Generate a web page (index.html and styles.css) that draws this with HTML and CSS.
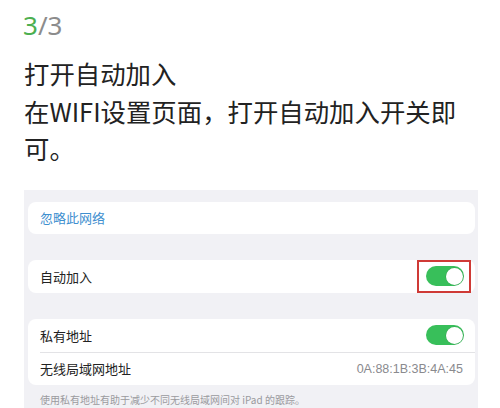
FILE: index.html
```html
<!DOCTYPE html>
<html lang="zh-CN">
<head>
<meta charset="utf-8">
<link rel="stylesheet" href="styles.css">
</head>
<body>
<div class="page">
  <div class="step"><span class="cur">3</span>/3</div>
  <h1 class="title">打开自动加入<br>在WIFI设置页面，打开自动加入开关即可。</h1>
  <div class="panel">
    <div class="card card-first">
      <div class="row row-short"><span class="link">忽略此网络</span></div>
    </div>
    <div class="card card-gap">
      <div class="row">
        <span class="label">自动加入</span>
        <span class="toggle"><span class="knob"></span></span>
        <span class="highlight"></span>
      </div>
    </div>
    <div class="card card-gap">
      <div class="row">
        <span class="label">私有地址</span>
        <span class="toggle"><span class="knob"></span></span>
      </div>
      <div class="sep"></div>
      <div class="row row-short">
        <span class="label">无线局域网地址</span>
        <span class="mac">0A:88:1B:3B:4A:45</span>
      </div>
    </div>
    <p class="note">使用私有地址有助于减少不同无线局域网间对 iPad 的跟踪。</p>
  </div>
</div>
</body>
</html>
```

FILE: styles.css
```css
html, body {
  margin: 0;
  padding: 0;
  background: #ffffff;
}
body {
  font-family: "Noto Sans CJK SC", "Noto Sans", sans-serif;
  color: #222222;
  width: 500px;
  height: 408px;
  overflow: hidden;
}
.page {
  padding-top: 10px;
}
.step {
  font-family: "Noto Sans", "Liberation Sans", sans-serif;
  font-size: 26px;
  line-height: 30px;
  color: #8c8c8c;
  padding-left: 23px;
}
.step .cur {
  color: #4caf50;
}
.title {
  margin: 15px 0 0 0;
  padding: 0 40px 0 24px;
  font-weight: 400;
  font-size: 25.4px;
  line-height: 37.5px;
  color: #222222;
}
.panel {
  margin: 22px 0 0 24px;
  width: 454px;
  height: 220px;
  background: #f1f1f5;
  padding: 12px 3px 0 4px;
  box-sizing: border-box;
  overflow: hidden;
}
.card {
  background: #ffffff;
  border-radius: 8px;
}
.card-gap {
  margin-top: 26px;
}
.row {
  position: relative;
  display: flex;
  align-items: center;
  justify-content: space-between;
  height: 33px;
  padding: 0 11px 0 12px;
  font-size: 13px;
}
.row-short {
  height: 32px;
}
.link {
  color: #3f8fcf;
}
.label {
  color: #222222;
}
.mac {
  font-family: "Liberation Sans", Arial, sans-serif;
  font-size: 12.5px;
  color: #8a8a8e;
  margin-right: 1px;
}
.sep {
  height: 1px;
  background: #e3e3e6;
  margin-left: 12px;
}
.toggle {
  position: relative;
  display: block;
  width: 38px;
  height: 20px;
  border-radius: 10px;
  background: #38bf5a;
}
.knob {
  position: absolute;
  top: 1.5px;
  right: 1.5px;
  width: 17px;
  height: 17px;
  border-radius: 50%;
  background: #ffffff;
  box-shadow: 0 0 0 0.5px rgba(0,0,0,0.15);
}
.highlight {
  position: absolute;
  right: 4px;
  top: 0;
  width: 54px;
  height: 33px;
  box-sizing: border-box;
  border: 2px solid #cf3a36;
}
.note {
  margin: 8px 0 0 12px;
  font-size: 10px;
  line-height: 14px;
  color: #9a9a9e;
}
```
